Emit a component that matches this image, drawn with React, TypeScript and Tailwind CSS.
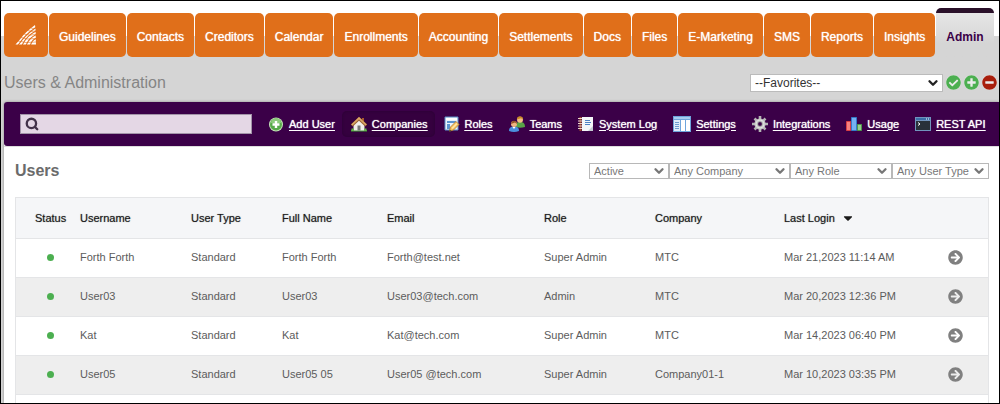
import type { ReactNode } from 'react';
import { FaArrowCircleRight, FaCaretDown, FaCheckCircle, FaMinusCircle, FaPlusCircle } from 'react-icons/fa';
import { ChevronDown, Search } from 'lucide-react';

const tabs = [
  'Guidelines',
  'Contacts',
  'Creditors',
  'Calendar',
  'Enrollments',
  'Accounting',
  'Settlements',
  'Docs',
  'Files',
  'E-Marketing',
  'SMS',
  'Reports',
  'Insights',
];

type User = {
  username: string;
  type: string;
  name: string;
  email: string;
  role: string;
  company: string;
  lastLogin: string;
};

const users: User[] = [
  { username: 'Forth Forth', type: 'Standard', name: 'Forth Forth', email: 'Forth@test.net', role: 'Super Admin', company: 'MTC', lastLogin: 'Mar 21,2023 11:14 AM' },
  { username: 'User03', type: 'Standard', name: 'User03', email: 'User03@tech.com', role: 'Admin', company: 'MTC', lastLogin: 'Mar 20,2023 12:36 PM' },
  { username: 'Kat', type: 'Standard', name: 'Kat', email: 'Kat@tech.com', role: 'Super Admin', company: 'MTC', lastLogin: 'Mar 14,2023 06:40 PM' },
  { username: 'User05', type: 'Standard', name: 'User05 05', email: 'User05 @tech.com', role: 'Super Admin', company: 'Company01-1', lastLogin: 'Mar 10,2023 03:35 PM' },
];

const Logo = () => (
  <svg width="22" height="22" viewBox="0 0 22 22" fill="none">
    <path d="M.5 20.500C5 16 7 12 11 8.500C14 5.500 17 3.500 20 1C21 6 20.500 13 21 20.500z" fill="#fff" />
    {/* rays, then the arcs that cut them into cells */}
    <path
      d="M3.200 21C8 14 13 8.500 21 3.500M7.200 21C10 15 14 10.500 21 7M11.200 21C13 16.500 16 13 21 10.700M15.500 21C16.500 17.500 18.500 15.500 21 14.500"
      stroke="#e06f1a"
      strokeWidth="1.100"
    />
    <path
      d="M3 17Q10 19.500 21 18M6 13.500Q12 16 21 14.500M9 10Q14 12 21 10.500M12.500 6.500Q16.500 8 21 7M16 4Q18 5 21 4"
      stroke="#e06f1a"
      strokeWidth=".6"
    />
  </svg>
);

const AddIcon = () => (
  <svg width="16" height="16" viewBox="0 0 16 16">
    <circle cx="8" cy="8.500" r="7" fill="#c4e3b8" />
    <circle cx="8" cy="8.500" r="6" fill="#58a94b" />
    <path d="M3 7a5 5 0 0 1 10 0z" fill="#8cca7c" />
    <path d="M8 5v7M4.500 8.500h7" stroke="#fff" strokeWidth="2.400" />
  </svg>
);

const HouseIcon = () => (
  <svg width="16" height="16" viewBox="0 0 16 16">
    <path d="M0 14q4-2 8-1t8 1v1.500H0z" fill="#3f9b35" />
    <path d="M11 2h2v4h-2z" fill="#a85a2c" />
    <path d="M2.500 8L8 3l5.500 5v6.500h-11z" fill="#f1eeec" />
    <path d="M.8 9.500L8 2.700l7.200 6.800" fill="none" stroke="#9a6234" strokeWidth="3" />
    <path d="M.8 9L8 2.200 15.200 9" fill="none" stroke="#dca768" strokeWidth="1.600" />
    <path d="M6.500 9.500h3v5h-3z" fill="#777" />
    <path d="M.5 12.500h2.500V15H.5zM13 12.500h2.500V15H13z" fill="#67b34e" />
  </svg>
);

const RolesIcon = () => (
  <svg width="16" height="16" viewBox="0 0 16 16">
    <path d="M1 1h13v13H1z" fill="#e9f2fb" stroke="#5c8fc8" />
    <path d="M2 2h11v2H2z" fill="#fff" />
    <path d="M3 5h9v2H3zM3 8h3v5H3z" fill="#5b94d0" />
    <path d="M5.500 15l1-4 5.500-5.500L15 8.500 9.500 14z" fill="#f4c263" stroke="#b87824" strokeWidth=".8" />
    <path d="M8 12.500l5-5" stroke="#ffe9a8" strokeWidth="1.400" />
    <path d="M5 16l.8-2.500 1.700 1.700z" fill="#443" />
  </svg>
);

const TeamsIcon = () => (
  <svg width="16" height="16" viewBox="0 0 16 16">
    <path d="M6.500 11c0-4 1.500-5 4.500-5s5 1 5 5q-5 1.500-9.500 0z" fill="#58a347" />
    <circle cx="11" cy="3.700" r="3" fill="#f2bd86" />
    <path d="M7.800 3.500C8-1 14-1 14.200 3.500L12 2.200z" fill="#c88a25" />
    <path d="M0 15c0-3.500 2-4.500 5-4.500s5 1 5 4.500q-5 2-10 0z" fill="#4b8fde" />
    <path d="M3.500 11L5 13l1.500-2z" fill="#fff" />
    <circle cx="5" cy="8" r="3" fill="#f0b583" />
    <path d="M2 8C2 3.500 8 3.500 8 8L6 6.500z" fill="#96552b" />
  </svg>
);

const LogIcon = () => (
  <svg width="16" height="16" viewBox="0 0 16 16">
    <path d="M1.500 1h2v14h-2z" fill="#a0492c" />
    <path d="M4 1h11v14H4z" fill="#f4f6f9" />
    <path d="M15 10l-5 5h5z" fill="#c4cad2" />
    <path d="M0 2.500h4M0 5h4M0 7.500h4M0 10h4M0 12.500h4" stroke="#e8d4cc" />
    <path d="M7 4.500h5M7 6.500h6M7 8.500h5" stroke="#4f83c4" />
  </svg>
);

const SettingsIcon = () => (
  <svg width="18" height="16" viewBox="0 0 18 16">
    <path d="M0 0h18v16H0z" fill="#6fa5dc" />
    <path d="M1 1h16v2H1z" fill="#a7cdf0" />
    <path d="M1 4h6v11H1z" fill="#dfeafa" />
    <path d="M8 4h4v11H8zM13 4h4v11h-4z" fill="#fff" />
    <path d="M2 6.500h4M2 8.500h4M2 10.500h4M2 12.500h4" stroke="#6e9ad0" />
  </svg>
);

const GearIcon = () => (
  <svg width="16" height="16" viewBox="0 0 16 16" fill="none">
    <path d="M8 0v16M0 8h16M2.500 2.500l11 11M13.500 2.500l-11 11" stroke="#b4b4b4" strokeWidth="2.600" />
    <circle cx="8" cy="8" r="5.600" fill="#c4c4c4" />
    <circle cx="8" cy="8" r="4" stroke="#e2e2e2" strokeWidth="1" />
    <circle cx="8" cy="8" r="2.200" fill="#3b0048" stroke="#999" strokeWidth=".6" />
  </svg>
);

const UsageIcon = () => (
  <svg width="16" height="16" viewBox="0 0 16 16">
    <path d="M.5 5.500h4v9h-4z" fill="#f58080" stroke="#d93f45" />
    <path d="M5.500 1.500h5v13h-5z" fill="#75b1f2" stroke="#347bcb" />
    <path d="M11.500 8.500h4v6h-4z" fill="#9ccc91" stroke="#4c9a4a" />
  </svg>
);

const TerminalIcon = () => (
  <svg width="16" height="16" viewBox="0 0 16 16">
    <path d="M0 1h16v14H0z" fill="#7194bd" />
    <path d="M1 2h14v2H1z" fill="#3c6ea8" />
    <path d="M11 2.500h1v1h-1zM13 2.500h1v1h-1z" fill="#fff" />
    <path d="M1 5h14v9H1z" fill="#29313a" />
    <path d="M3 6.500l2 1.500-2 1.500" fill="none" stroke="#fff" />
  </svg>
);

const tools: { label: string; icon: ReactNode; active?: boolean }[] = [
  { label: 'Add User', icon: <AddIcon /> },
  { label: 'Companies', icon: <HouseIcon />, active: true },
  { label: 'Roles', icon: <RolesIcon /> },
  { label: 'Teams', icon: <TeamsIcon /> },
  { label: 'System Log', icon: <LogIcon /> },
  { label: 'Settings', icon: <SettingsIcon /> },
  { label: 'Integrations', icon: <GearIcon /> },
  { label: 'Usage', icon: <UsageIcon /> },
  { label: 'REST API', icon: <TerminalIcon /> },
];

type FilterProps = {
  label: string;
  value: string;
  className: string;
};

const Filter = ({ label, value, className }: FilterProps) => (
  <div className={`grid items-center ${className}`}>
    <select
      aria-label={label}
      className="col-start-1 row-start-1 h-4 w-full appearance-none border border-[#b8b8b8] bg-white pl-1 text-[11px] leading-3 text-[#777]"
    >
      <option>{value}</option>
    </select>
    <ChevronDown
      className="pointer-events-none col-start-1 row-start-1 mr-[3px] justify-self-end text-[#777]"
      size={14}
      strokeWidth={4}
    />
  </div>
);

const Header = () => (
  <header className="bg-[linear-gradient(#fff_35px,#d5d5d5_35px)]">
    <nav className="flex items-end gap-px pl-[3px] pt-[7px]">
      <a href="#" aria-label="Home" className="flex h-11 w-11 items-center justify-center rounded-[5px] bg-[#e06f1a]">
        <Logo />
      </a>
      {tabs.map((tab) => (
        <a
          key={tab}
          href="#"
          className="flex h-11 items-center rounded-[5px] bg-[#e06f1a] px-2.5 pt-1 text-xs text-white [text-shadow:0_0_1px_#fff]"
        >
          {tab}
        </a>
      ))}
      <a
        href="#"
        className="flex h-[49px] items-center rounded-t-[5px] border-t-[5px] border-[#2a1029] bg-linear-to-b from-[#e6e6e6] to-[#d5d5d5] to-70% px-2.5 pt-1 text-xs font-bold text-[#3b0048]"
      >
        Admin
      </a>
    </nav>
    <div className="flex h-[45px] items-center justify-between pl-[3px] pr-0.5 pt-1.5">
      <h1 className="text-base text-[#858585]">Users &amp; Administration</h1>
      <div className="flex items-center gap-[3px]">
        <div className="grid w-[193px] items-center">
          <select
            aria-label="Favorites"
            className="col-start-1 row-start-1 h-[18px] w-full appearance-none border border-[#bbb] bg-white pl-1 text-xs leading-4 text-[#333]"
          >
            <option>--Favorites--</option>
          </select>
          <ChevronDown
            className="pointer-events-none col-start-1 row-start-1 mr-[3px] justify-self-end text-[#222]"
            size={14}
            strokeWidth={4}
          />
        </div>
        <button aria-label="Apply favorite" className="rounded-full bg-[#ececec] text-[#4caf50]">
          <FaCheckCircle size={15} />
        </button>
        <button aria-label="Add favorite" className="rounded-full bg-[#ececec] text-[#4caf50]">
          <FaPlusCircle size={15} />
        </button>
        <button aria-label="Remove favorite" className="rounded-full bg-[#ececec] text-[#a81e0c]">
          <FaMinusCircle size={15} />
        </button>
      </div>
    </div>
  </header>
);

const Toolbar = () => (
  <div className="flex h-11 items-center rounded-l-[3px] bg-[#3b0048] pl-4">
    <label className="flex h-5 min-w-0 max-w-[232px] flex-1 items-center border border-[#a294a8] bg-[#e4d7e5] pl-1">
      <Search size={14} strokeWidth={4} className="text-[#43334a]" />
      <input type="text" aria-label="Search users" className="min-w-0 flex-1 bg-transparent px-1 text-[11px] outline-none" />
    </label>
    <nav className="ml-[7px] flex shrink-0">
      {tools.map(({ label, icon, active }) => (
        <a
          key={label}
          href="#"
          className={`flex h-[26px] items-center gap-[5px] rounded-[5px] pl-[9px] pr-[7px] text-[11px] text-white underline underline-offset-2 [text-shadow:0_0_1px_#fff] ${
            active ? 'bg-[#35003f] shadow-[inset_0_0_3px_#2a0033]' : ''
          }`}
        >
          {icon}
          {label}
        </a>
      ))}
    </nav>
  </div>
);

const UserRow = ({ user }: { user: User }) => (
  <tr className="h-[39px] border-b border-[#e4e5e7] even:bg-[#eee]">
    <td className="pl-[18px] pr-3.5">
      <span role="img" aria-label="Active" className="mx-auto block h-[7px] w-[7px] rounded-full bg-[#4caf50]" />
    </td>
    <td>{user.username}</td>
    <td>{user.type}</td>
    <td>{user.name}</td>
    <td>{user.email}</td>
    <td>{user.role}</td>
    <td>{user.company}</td>
    <td>{user.lastLogin}</td>
    <td>
      <button aria-label={`Open ${user.username}`} className="mx-auto block text-[#808080]">
        <FaArrowCircleRight size={15} />
      </button>
    </td>
  </tr>
);

const UserTable = () => (
  <table className="w-full table-fixed text-left text-[11px] text-[#5c5c5c]">
    <colgroup>
      <col className="w-[64px]" />
      <col className="w-[111px]" />
      <col className="w-[91px]" />
      <col className="w-[105px]" />
      <col className="w-[157px]" />
      <col className="w-[111px]" />
      <col className="w-[129px]" />
      <col />
      <col className="w-[66px]" />
    </colgroup>
    <thead>
      <tr className="h-10 border-b border-[#e4e5e7] bg-[#f5f6f8] text-[#1a1a1a] [text-shadow:0_0_1px_#777] *:font-normal">
        <th className="pl-[19px]">Status</th>
        <th>Username</th>
        <th>User Type</th>
        <th>Full Name</th>
        <th>Email</th>
        <th>Role</th>
        <th>Company</th>
        <th>
          <span className="flex items-center gap-1.5">
            Last Login
            <FaCaretDown size={14} />
          </span>
        </th>
        <th aria-label="Open" />
      </tr>
    </thead>
    <tbody>
      {users.map((user) => (
        <UserRow key={user.username} user={user} />
      ))}
    </tbody>
  </table>
);

const App = () => {
  return (
    <div className="flex min-h-screen flex-col border border-black bg-[#d5d5d5] font-['Liberation_Sans',Arial,sans-serif]">
      <Header />
      <main className="ml-[3px] flex flex-1 flex-col rounded-tl-[3px] bg-white shadow-[0_0_3px_#888] [clip-path:inset(-3px_0_0_-3px)]">
        <Toolbar />
        <div className="flex flex-1 flex-col border-t border-[#ddd] pl-[11px] pr-2.5">
          <div className="flex h-[50px] items-center justify-between pb-[3px]">
            <h2 className="text-base font-bold text-[#6b6b6b]">Users</h2>
            <div className="flex">
              <Filter label="Status" value="Active" className="w-20" />
              <Filter label="Company" value="Any Company" className="w-[121px]" />
              <Filter label="Role" value="Any Role" className="w-[102px]" />
              <Filter label="User type" value="Any User Type" className="w-[97px]" />
            </div>
          </div>
          <div className="flex-1 border-x border-t border-[#e4e5e7]">
            <UserTable />
          </div>
        </div>
      </main>
    </div>
  );
};

export default App;
